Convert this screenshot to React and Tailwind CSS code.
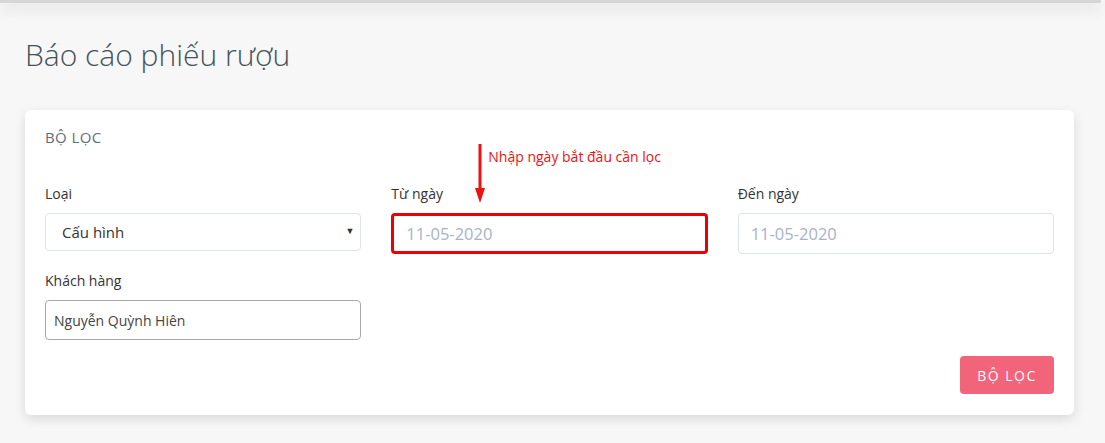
import { useState } from "react";

export default function App() {
    const [loai, setLoai] = useState("cauhinh");
    const [khachHang, setKhachHang] = useState("Nguyễn Quỳnh Hiên");

    const font = { fontFamily: '"Open Sans", "Noto Sans", sans-serif' };

    return (
        <div className="min-h-[443px] bg-[#f7f7f7] pb-8" style={font}>
            {/* Header shadow */}
            <div className="mr-[4px] h-[3px] bg-[#d6d6d6] shadow-[0_4px_16px_rgba(0,0,0,0.25)]" />

            <div className="px-[25px] pr-[31px]">
                <h1 className="pt-[32px] text-[30px] font-light leading-[40px] text-[#45525c]">
                    Báo cáo phiếu rượu
                </h1>

                {/* Filter card */}
                <div className="relative mt-[35px] rounded-md bg-white px-5 pt-[17px] pb-[21px] shadow-[0_4px_12px_rgba(0,0,0,0.12)]">
                    <div className="text-[15px] leading-5 tracking-[0.4px] text-[#5f6e7c]">BỘ LỌC</div>

                    <div className="mt-[37px] grid grid-cols-3 gap-x-[30px]">
                        <div>
                            <label className="block text-[14px] leading-5 text-[#333]">Loại</label>
                            <div className="relative mt-[9px]">
                                <select
                                    value={loai}
                                    onChange={(e) => setLoai(e.target.value)}
                                    className="h-[38px] w-full appearance-none rounded border border-[#dfe3ec] bg-white px-4 text-[15px] text-[#333] outline-none"
                                >
                                    <option value="cauhinh">Cấu hình</option>
                                </select>
                                <span className="pointer-events-none absolute right-[7px] top-[11px] text-[9px] text-[#333]">▼</span>
                            </div>
                        </div>

                        <div className="relative">
                            {/* Annotation */}
                            <svg className="absolute left-[83px] top-[-40px]" width="12" height="60" viewBox="0 0 12 60">
                                <rect x="4.5" y="0" width="3" height="46" fill="#ee1111" />
                                <polygon points="1,44 11,44 6,59" fill="#ee1111" />
                            </svg>
                            <span className="absolute left-[97px] top-[-37px] text-[14px] leading-5 text-[#ee1111]">
                                Nhập ngày bắt đầu cần lọc
                            </span>
                            <label className="block text-[14px] leading-5 text-[#333]">Từ ngày</label>
                            <input
                                readOnly
                                value="11-05-2020"
                                className="mt-[9px] h-[41px] w-full rounded-sm border-[3px] border-[#ee0000] bg-white px-3 text-[16.5px] text-[#a7b3c9] outline-none"
                            />
                        </div>

                        <div>
                            <label className="block text-[14px] leading-5 text-[#333]">Đến ngày</label>
                            <input
                                readOnly
                                value="11-05-2020"
                                className="mt-[9px] h-[41px] w-full rounded border border-[#dfe3ec] bg-white px-3 text-[16.5px] text-[#a7b3c9] outline-none"
                            />
                        </div>

                        <div className="mt-[17px]">
                            <label className="block text-[14px] leading-5 text-[#333]">Khách hàng</label>
                            <input
                                value={khachHang}
                                onChange={(e) => setKhachHang(e.target.value)}
                                className="mt-[9px] h-[40px] w-full rounded border border-[#a9a9a9] bg-white px-2 text-[14px] text-[#444] outline-none"
                            />
                        </div>
                    </div>

                    <div className="mt-[16px] flex justify-end">
                        <button className="h-[38px] w-[94px] rounded bg-[#f2647a] text-[14px] tracking-[1.5px] text-white">
                            BỘ LỌC
                        </button>
                    </div>
                </div>
            </div>
        </div>
    );
}
